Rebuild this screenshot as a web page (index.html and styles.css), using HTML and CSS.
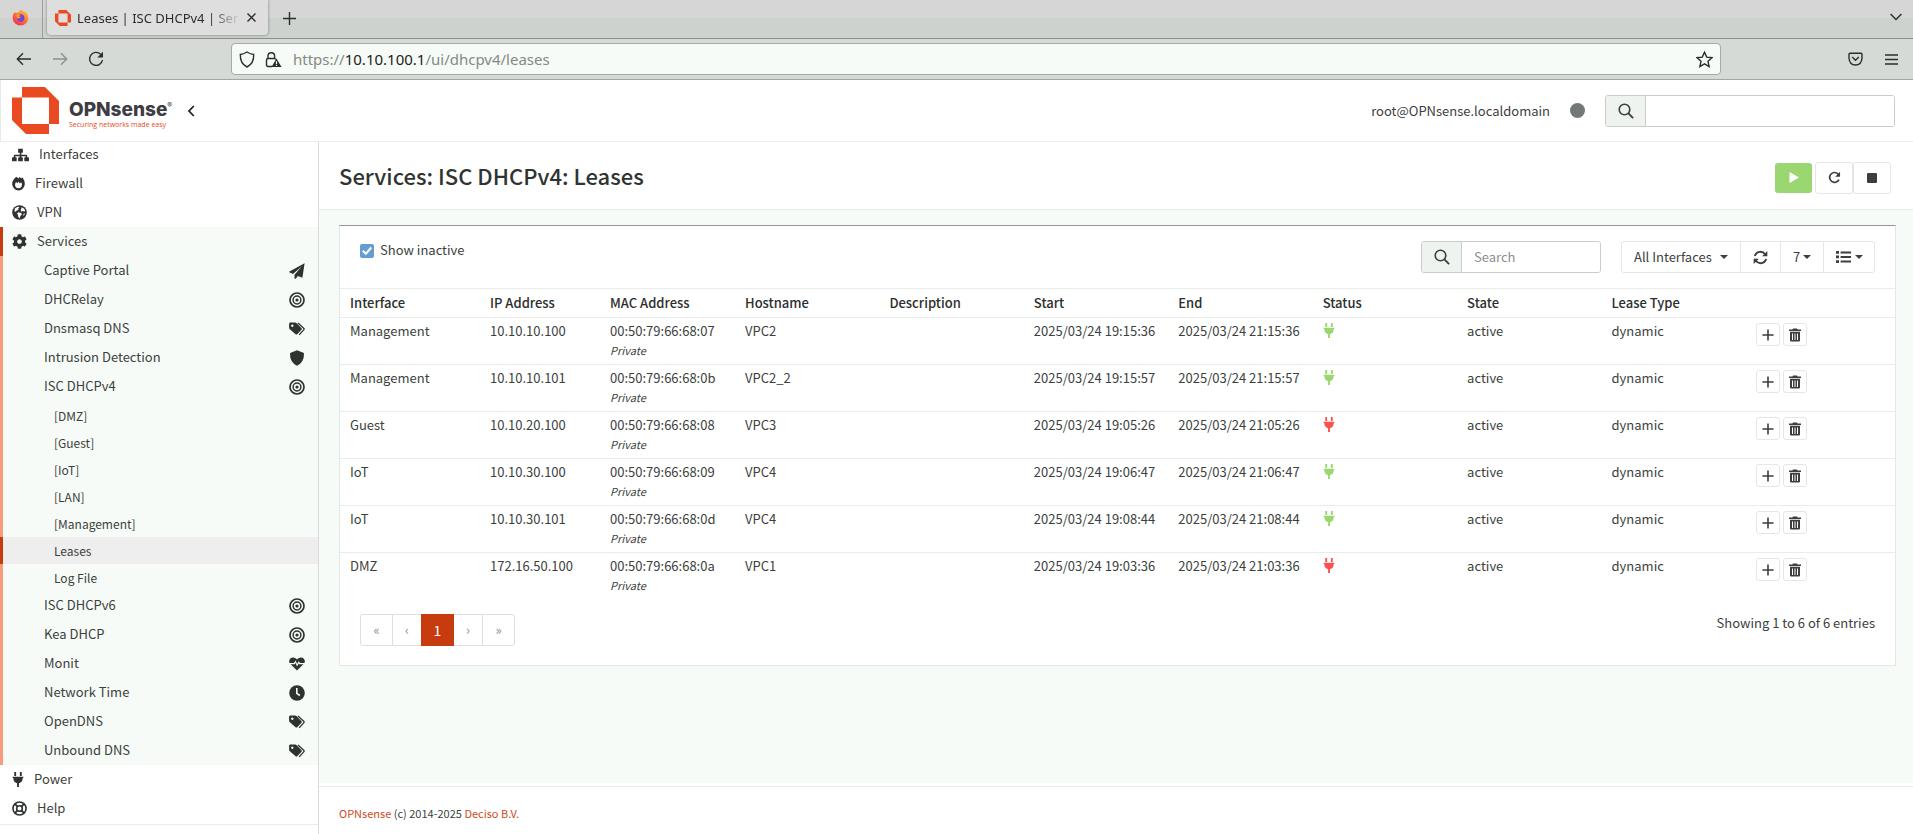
FILE: index.html
```html
<!DOCTYPE html>
<html lang="en">
<head>
<meta charset="utf-8">
<title>Leases | ISC DHCPv4 | Services</title>
<link rel="stylesheet" href="styles.css">
</head>
<body>
<svg class="defs" aria-hidden="true">
  <symbol id="i-sitemap" viewBox="0 0 18 14"><path d="M6.5 0.5h5v4.2H9.9v2h5.2a1 1 0 0 1 1 1v1.6h.9q1 0 1 1v2.4q0 1-1 1h-3q-1 0-1-1v-2.4q0-1 1-1h.5V8.2H9.9v1.1h.6q1 0 1 1v2.4q0 1-1 1h-3q-1 0-1-1v-2.4q0-1 1-1h.7V8.2H3.5v1.1H4q1 0 1 1v2.4q0 1-1 1H1q-1 0-1-1v-2.4q0-1 1-1h.9V7.700a1 1 0 0 1 1-1h5.300v-2H6.500z"/></symbol>
  <symbol id="i-fire" viewBox="0 0 14 16"><path fill-rule="evenodd" d="M4.600.8q1.200.7 2 1.900Q7.400 1.500 8.300 1q1 .6 1.700 1.500.7-.8 1.400-1 2.400 3.300 2.400 7A6.800 7 0 0 1 .2 8.500Q.2 4.500 4.600.8zM4.400 6.500Q3.300 7.800 3.300 9.300A3.700 3.700 0 0 0 10.700 9.300q0-1.500-.9-2.600L8.600 7.900 6.900 6 5.600 7.800z"/></symbol>
  <symbol id="i-globe" viewBox="0 0 16 16"><circle cx="8" cy="8" r="7.800"/><path fill="#fff" d="M3.400 3.200 6.400 1.800 8 2.300 6.600 3.700 6.900 5 4.700 6.100 4.200 7.200 2.500 6.700zM10.300 2.500l2.500 1.200 1.300 2.500-.8.600-2-.3-1.200.8-.9-1.700.5-1.200zM6.800 7.600l3 1 .8 1.200-1.600 2-1 2.700-1.300-1.700-.3-2.200-1-1.500zM12.300 9.300l1.400-.6-.5 2-1.200 1z"/></symbol>
  <symbol id="i-cog" viewBox="0 0 512 512"><path d="M487.400 315.700l-42.600-24.600c4.300-23.200 4.300-47 0-70.200l42.600-24.600c4.900-2.800 7.100-8.600 5.500-14-11.100-35.600-30-67.800-54.700-94.600-3.800-4.100-10-5.100-14.800-2.300L380.800 110c-17.900-15.400-38.500-27.300-60.800-35.100V25.800c0-5.600-3.900-10.500-9.400-11.700-36.700-8.200-74.300-7.800-109.200 0-5.500 1.200-9.400 6.100-9.400 11.700V75c-22.200 7.900-42.800 19.800-60.800 35.100L88.700 85.500c-4.900-2.800-11-1.900-14.800 2.300-24.700 26.700-43.600 58.900-54.700 94.600-1.700 5.400.6 11.200 5.500 14L67.300 221c-4.300 23.200-4.300 47 0 70.200l-42.600 24.600c-4.900 2.800-7.100 8.600-5.500 14 11.100 35.600 30 67.800 54.700 94.600 3.800 4.100 10 5.100 14.800 2.300l42.600-24.600c17.900 15.400 38.500 27.300 60.800 35.100v49.200c0 5.600 3.900 10.500 9.400 11.700 36.700 8.200 74.300 7.800 109.200 0 5.500-1.200 9.400-6.100 9.400-11.700v-49.200c22.200-7.900 42.800-19.800 60.800-35.100l42.600 24.600c4.900 2.800 11 1.900 14.800-2.300 24.700-26.700 43.600-58.900 54.700-94.600 1.500-5.500-.7-11.300-5.600-14.100zM256 336c-44.100 0-80-35.900-80-80s35.900-80 80-80 80 35.900 80 80-35.900 80-80 80z"/></symbol>
  <symbol id="i-plane" viewBox="0 0 16 16"><path d="M15.600.3 13.400 14.800 8.900 12.900 6.500 15.900 5.500 15.500V11.700L12.900 3.300 4 10.900.3 9.300Q0 8.800.4 8.500z"/></symbol>
  <symbol id="i-target" viewBox="0 0 16 16"><g fill="none" stroke="currentColor"><circle cx="8" cy="8" r="7" stroke-width="1.700"/><circle cx="8" cy="8" r="3.900" stroke-width="1.500"/></g><circle cx="8" cy="8" r="1.600"/></symbol>
  <symbol id="i-tags" viewBox="0 0 17 16"><path fill-rule="evenodd" d="M1.500 1.200h5.200q.7 0 1.200.5l5.400 5.400q.8.900 0 1.700L8.700 13.600q-.9.700-1.700 0L.6 7.900Q.1 7.400.1 6.700V2.600q0-1.400 1.400-1.400zM3.500 3.200a1.300 1.300 0 1 0 .01 0z"/><path fill="none" stroke="currentColor" stroke-width="1.400" d="M9.500 1.700 15.600 7.200q.9.800 0 1.700L10.800 14.200"/></symbol>
  <symbol id="i-shield" viewBox="0 0 16 16"><path d="M8 .3 14.300 2.700Q15 3 15 3.700 15.200 12.200 8 15.800.8 12.200 1 3.700 1 3 1.700 2.700z"/></symbol>
  <symbol id="i-heart" viewBox="0 0 16 16"><path d="M8 14.500 1.600 8.300h4.100l.8-1.500 1.500 3.600 1.700-3 .6.900h4.100zM.6 7.100C-.8 3.900 1.500 1.500 4 1.500 6 1.500 7.200 2.500 8 3.500 8.800 2.500 10 1.500 12 1.500c2.500 0 4.800 2.400 3.400 5.600H11L9.700 5.200 8.100 8 6.600 4.500 4.900 7.100z"/></symbol>
  <symbol id="i-clock" viewBox="0 0 16 16"><circle cx="8" cy="8" r="7.800"/><path fill="none" stroke="#f6fbf7" stroke-width="1.600" d="M7.800 3v5.300l3 2.200"/></symbol>
  <symbol id="i-plug" viewBox="0 0 12 16"><path d="M2 0h2v4.200H2zM8 0h2v4.200H8zM.3 5h11.400v1.500h-.7Q11 11 7 11.900V16H5v-4.100Q1 11 1 6.500H.3z"/></symbol>
  <symbol id="i-ring" viewBox="0 0 16 16"><g fill="none" stroke="currentColor"><circle cx="8" cy="8" r="7" stroke-width="1.700"/><circle cx="8" cy="8" r="3" stroke-width="1.700"/><path stroke-width="2" d="m3 3 3 3M13 3l-3 3M3 13l3-3M13 13l-3-3"/></g></symbol>
  <symbol id="i-search" viewBox="0 0 16 16"><g fill="none" stroke="currentColor"><circle cx="6.500" cy="6.500" r="5.300" stroke-width="1.600"/><path stroke-width="1.900" stroke-linecap="round" d="m10.700 10.700 3.900 3.900"/></g></symbol>
  <symbol id="i-repeat" viewBox="0 0 14 14"><path fill="none" stroke="currentColor" stroke-width="1.800" d="M11.300 3.700A5.300 5.300 0 1 0 11.800 9.300"/><path d="M13 .8v5.300H7.800z"/></symbol>
  <symbol id="i-sync" viewBox="0 0 16 16"><g fill="none" stroke="currentColor" stroke-width="2"><path d="M2 6.500A6.100 6.100 0 0 1 12.900 4.500M14 9.500A6.100 6.100 0 0 1 3.100 11.500"/></g><path d="M15.300 1v5.600H9.700zM.7 15V9.400h5.600z"/></symbol>
  <symbol id="i-list" viewBox="0 0 16 14"><path d="M1 1h3v2.700H1zM1 5.600h3v2.700H1zM1 10.200h3v2.700H1zM5.600 1.400H16v2H5.600zM5.600 6H16v2H5.600zM5.600 10.600H16v2H5.600z"/></symbol>
  <symbol id="i-plus" viewBox="0 0 12 12"><path d="M5.200.4h1.600v4.800h4.800v1.600H6.800v4.800H5.200V6.800H.4V5.200h4.800z"/></symbol>
  <symbol id="i-trash" viewBox="0 0 12 14"><path fill-rule="evenodd" d="M4 .4h4l.6 1H12v1.500H0V1.400h3.400zM1 3.700h10v8.800q0 1.100-1.100 1.100H2.100Q1 13.600 1 12.500zM3 5.400v6.500h1V5.400zM5.500 5.400v6.500h1V5.400zM8 5.400v6.500h1V5.400z"/></symbol>
  <symbol id="i-caret" viewBox="0 0 8 4"><path d="M0 0h8L4 4z"/></symbol>
  <symbol id="i-opn" viewBox="0 0 47 47"><path fill="#e94a22" d="M10 0h23l14 14v23h-10V10.500H10zM0 10.500h10v26.500h27v10H14L0 33z"/></symbol>
</svg>

<div class="browser">
  <div class="tabbar">
    <div class="pinned">
      <svg width="17" height="17" viewBox="0 0 17 17"><defs><linearGradient id="fx" x1="1" y1="0" x2="0.300" y2="1"><stop offset="0" stop-color="#ffe04a"/><stop offset=".5" stop-color="#ff7a2e"/><stop offset="1" stop-color="#f3305f"/></linearGradient></defs><path fill="url(#fx)" d="M2.500 3.200 4.500 4 6.500 3.200Q8 .9 10.500.5q0 1.300 1.500 2.700l1.500-1q3 3 2.900 6.500a7.900 7.900 0 0 1-15.800 0Q.6 5.500 2.500 3.200z"/><circle cx="8.700" cy="9" r="3.700" fill="#6b48d8"/><path fill="#ff9a2a" d="M4 6q2-1.500 4.500 0L6.800 7.500q1 .5 2.200.3Q8 10.300 5.300 9.300z"/></svg>
    </div>
    <div class="tab">
      <svg width="16" height="16"><use href="#i-opn"/></svg>
      <span class="tab-title">Leases | ISC DHCPv4 | Ser</span>
      <button class="tab-close" aria-label="Close tab"><svg width="9" height="9" viewBox="0 0 9 9"><path class="line" d="m.5.5 8 8M8.500.5l-8 8"/></svg></button>
    </div>
    <button class="newtab" aria-label="New tab"><svg width="13" height="13" viewBox="0 0 13 13"><path class="line" d="M6.500 0v13M0 6.500h13"/></svg></button>
    <button class="alltabs" aria-label="List tabs"><svg width="12" height="8" viewBox="0 0 12 8"><path class="line" d="m.6 1 5.400 5.400L11.400 1"/></svg></button>
  </div>
  <div class="navbar">
    <div class="navbuttons">
      <button aria-label="Back"><svg width="16" height="14" viewBox="0 0 16 14"><path class="line" d="M15 7H1.500M7 1.300 1.300 7 7 12.700"/></svg></button>
      <button class="dim" aria-label="Forward"><svg width="16" height="14" viewBox="0 0 16 14"><path class="line" d="M1 7h13.500M9 1.300 14.700 7 9 12.700"/></svg></button>
      <button aria-label="Reload"><svg width="16" height="16" viewBox="0 0 16 16"><path class="line" d="M12.700 3.300A6.500 6.500 0 1 0 14.500 9"/><path d="M15 .8v5.700H9.300z"/></svg></button>
    </div>
    <div class="urlbar">
      <svg width="16" height="17" viewBox="0 0 16 17"><path class="line" d="M8 1q3.500 2.300 6.700 2.500Q15 12.500 8 16 1 12.500 1.300 3.500 4.500 3.300 8 1z"/></svg>
      <svg width="17" height="17" viewBox="0 0 17 17"><path class="line" d="M7 15.500H3q-1.500 0-1.500-1.500V9q0-1.500 1.500-1.500h6.500q1 0 1.300 1M3 7.500V5a3.300 3.300 0 0 1 6.600 0v2.500"/><path d="m11.500 7.500 5 8.500H6.500z"/><path stroke="#f6fbf7" stroke-width="1.200" d="M11.500 10.300v2.700M11.500 13.800V15"/></svg>
      <div class="url">https://<b>10.10.100.1</b>/ui/dhcpv4/leases</div>
      <svg width="17" height="17" viewBox="0 0 17 17"><path class="line" d="m8.500 1.200 2.200 4.900 5.300.6-4 3.600 1.100 5.200-4.600-2.700-4.600 2.700L5 10.300 1 6.700l5.300-.6z"/></svg>
    </div>
    <div class="navtools">
      <button aria-label="Pocket"><svg width="15" height="14" viewBox="0 0 15 14"><path class="line" d="M2 1.200h11q1 0 1 1v4Q13.500 12.800 7.500 13 1.500 12.800 1 6.200v-4q0-1 1-1zM4.200 5l3.300 3.200L10.800 5"/></svg></button>
      <button aria-label="Menu"><svg width="13" height="11" viewBox="0 0 13 11"><path class="line" d="M0 1h13M0 5.500h13M0 10h13"/></svg></button>
    </div>
  </div>
</div>

<header class="topbar">
  <a class="brand" href="#">
    <svg width="47" height="47"><use href="#i-opn"/></svg>
    <span class="brand-words"><span class="brand-name">OPNsense<sup>®</sup></span><span class="brand-tag">Securing networks made easy</span></span>
  </a>
  <button class="collapse" aria-label="Collapse menu"><svg width="8" height="12" viewBox="0 0 8 12"><path fill="none" stroke="#222" stroke-width="1.800" d="M6.800 1 2 6l4.800 5"/></svg></button>
  <div class="topright">
    <span>root@OPNsense.localdomain</span>
    <span class="dot"></span>
    <div class="input-group global">
      <span class="addon"><svg width="16" height="16"><use href="#i-search"/></svg></span>
      <input type="text" aria-label="Search menu">
    </div>
  </div>
</header>

<div class="layout">
  <aside class="sidebar">
    <nav>
      <a href="#"><svg width="17" height="14"><use href="#i-sitemap"/></svg>Interfaces</a>
      <a href="#"><svg width="13" height="15"><use href="#i-fire"/></svg>Firewall</a>
      <a href="#"><svg width="15" height="15"><use href="#i-globe"/></svg>VPN</a>
      <div class="open">
        <a class="current" href="#"><svg width="15" height="15"><use href="#i-cog"/></svg>Services</a>
        <a class="sub" href="#">Captive Portal<svg width="16" height="16"><use href="#i-plane"/></svg></a>
        <a class="sub" href="#">DHCRelay<svg width="16" height="16"><use href="#i-target"/></svg></a>
        <a class="sub" href="#">Dnsmasq DNS<svg width="16" height="16"><use href="#i-tags"/></svg></a>
        <a class="sub" href="#">Intrusion Detection<svg width="16" height="16"><use href="#i-shield"/></svg></a>
        <a class="sub" href="#">ISC DHCPv4<svg width="16" height="16"><use href="#i-target"/></svg></a>
        <div class="leaves">
          <a href="#">[DMZ]</a>
          <a href="#">[Guest]</a>
          <a href="#">[IoT]</a>
          <a href="#">[LAN]</a>
          <a href="#">[Management]</a>
          <a class="selected" href="#">Leases</a>
          <a href="#">Log File</a>
        </div>
        <a class="sub" href="#">ISC DHCPv6<svg width="16" height="16"><use href="#i-target"/></svg></a>
        <a class="sub" href="#">Kea DHCP<svg width="16" height="16"><use href="#i-target"/></svg></a>
        <a class="sub" href="#">Monit<svg width="16" height="16"><use href="#i-heart"/></svg></a>
        <a class="sub" href="#">Network Time<svg width="16" height="16"><use href="#i-clock"/></svg></a>
        <a class="sub" href="#">OpenDNS<svg width="16" height="16"><use href="#i-tags"/></svg></a>
        <a class="sub" href="#">Unbound DNS<svg width="16" height="16"><use href="#i-tags"/></svg></a>
      </div>
      <a href="#"><svg width="12" height="15"><use href="#i-plug"/></svg>Power</a>
      <a href="#"><svg width="15" height="15"><use href="#i-ring"/></svg>Help</a>
    </nav>
  </aside>

  <div class="page">
    <div class="pagehead">
      <h1>Services: ISC DHCPv4: Leases</h1>
      <div class="service">
        <button class="start" aria-label="Start"><svg width="10" height="11" viewBox="0 0 10 11"><path d="M.5 0 10 5.500.5 11z"/></svg></button>
        <button aria-label="Restart"><svg width="13" height="13"><use href="#i-repeat"/></svg></button>
        <button aria-label="Stop"><svg width="10" height="10" viewBox="0 0 10 10"><rect width="10" height="10" rx="1"/></svg></button>
      </div>
    </div>

    <main class="content">
      <section class="panel">
        <div class="toolbar">
          <label class="check"><input type="checkbox" checked><span>Show inactive</span></label>
          <div class="actions">
            <div class="input-group table-search">
              <span class="addon"><svg width="16" height="16"><use href="#i-search"/></svg></span>
              <input type="text" placeholder="Search" aria-label="Search leases">
            </div>
            <div class="btn-group">
              <span class="pick wide"><select aria-label="Interface"><option>All Interfaces</option></select><svg width="8" height="4"><use href="#i-caret"/></svg></span>
              <button aria-label="Refresh"><svg width="15" height="15"><use href="#i-sync"/></svg></button>
              <span class="pick rows"><select aria-label="Rows per page"><option>7</option></select><svg width="8" height="4"><use href="#i-caret"/></svg></span>
              <button class="columns" aria-label="Columns"><svg width="16" height="14"><use href="#i-list"/></svg><svg width="8" height="4"><use href="#i-caret"/></svg></button>
            </div>
          </div>
        </div>

        <table>
          <colgroup><col class="c-if"><col class="c-ip"><col class="c-mac"><col><col><col><col><col><col><col><col class="c-cmd"></colgroup>
          <thead>
            <tr><th>Interface</th><th>IP Address</th><th>MAC Address</th><th>Hostname</th><th>Description</th><th>Start</th><th>End</th><th>Status</th><th>State</th><th>Lease Type</th><th></th></tr>
          </thead>
          <tbody>
            <tr><td>Management</td><td>10.10.10.100</td><td>00:50:79:66:68:07<small>Private</small></td><td>VPC2</td><td></td><td>2025/03/24 19:15:36</td><td>2025/03/24 21:15:36</td><td class="up"><svg width="12" height="15"><use href="#i-plug"/></svg></td><td>active</td><td>dynamic</td><td class="cmd"><div><button aria-label="Add"><svg width="12" height="12"><use href="#i-plus"/></svg></button><button aria-label="Delete"><svg width="12" height="14"><use href="#i-trash"/></svg></button></div></td></tr>
            <tr><td>Management</td><td>10.10.10.101</td><td>00:50:79:66:68:0b<small>Private</small></td><td>VPC2_2</td><td></td><td>2025/03/24 19:15:57</td><td>2025/03/24 21:15:57</td><td class="up"><svg width="12" height="15"><use href="#i-plug"/></svg></td><td>active</td><td>dynamic</td><td class="cmd"><div><button aria-label="Add"><svg width="12" height="12"><use href="#i-plus"/></svg></button><button aria-label="Delete"><svg width="12" height="14"><use href="#i-trash"/></svg></button></div></td></tr>
            <tr><td>Guest</td><td>10.10.20.100</td><td>00:50:79:66:68:08<small>Private</small></td><td>VPC3</td><td></td><td>2025/03/24 19:05:26</td><td>2025/03/24 21:05:26</td><td class="down"><svg width="12" height="15"><use href="#i-plug"/></svg></td><td>active</td><td>dynamic</td><td class="cmd"><div><button aria-label="Add"><svg width="12" height="12"><use href="#i-plus"/></svg></button><button aria-label="Delete"><svg width="12" height="14"><use href="#i-trash"/></svg></button></div></td></tr>
            <tr><td>IoT</td><td>10.10.30.100</td><td>00:50:79:66:68:09<small>Private</small></td><td>VPC4</td><td></td><td>2025/03/24 19:06:47</td><td>2025/03/24 21:06:47</td><td class="up"><svg width="12" height="15"><use href="#i-plug"/></svg></td><td>active</td><td>dynamic</td><td class="cmd"><div><button aria-label="Add"><svg width="12" height="12"><use href="#i-plus"/></svg></button><button aria-label="Delete"><svg width="12" height="14"><use href="#i-trash"/></svg></button></div></td></tr>
            <tr><td>IoT</td><td>10.10.30.101</td><td>00:50:79:66:68:0d<small>Private</small></td><td>VPC4</td><td></td><td>2025/03/24 19:08:44</td><td>2025/03/24 21:08:44</td><td class="up"><svg width="12" height="15"><use href="#i-plug"/></svg></td><td>active</td><td>dynamic</td><td class="cmd"><div><button aria-label="Add"><svg width="12" height="12"><use href="#i-plus"/></svg></button><button aria-label="Delete"><svg width="12" height="14"><use href="#i-trash"/></svg></button></div></td></tr>
            <tr><td>DMZ</td><td>172.16.50.100</td><td>00:50:79:66:68:0a<small>Private</small></td><td>VPC1</td><td></td><td>2025/03/24 19:03:36</td><td>2025/03/24 21:03:36</td><td class="down"><svg width="12" height="15"><use href="#i-plug"/></svg></td><td>active</td><td>dynamic</td><td class="cmd"><div><button aria-label="Add"><svg width="12" height="12"><use href="#i-plus"/></svg></button><button aria-label="Delete"><svg width="12" height="14"><use href="#i-trash"/></svg></button></div></td></tr>
          </tbody>
        </table>

        <div class="tablefoot">
          <nav class="pager" aria-label="Pages">
            <a class="edge" href="#">«</a><a href="#">‹</a><a class="active" href="#">1</a><a href="#">›</a><a class="edge" href="#">»</a>
          </nav>
          <span class="count">Showing 1 to 6 of 6 entries</span>
        </div>
      </section>
    </main>

    <footer><div><a href="#">OPNsense</a> (c) 2014-2025 <a href="#">Deciso B.V.</a></div></footer>
  </div>
</div>
</body>
</html>
```
FILE: styles.css
```css
* { box-sizing: border-box; }
body {
  margin: 0;
  min-height: 100vh;
  display: flex;
  flex-direction: column;
  overflow: hidden;
  background: #fff;
  color: #3c3f3d;
  font: 13px/20px "Noto Sans CJK SC", "Noto Sans", sans-serif;
}
a { color: inherit; text-decoration: none; }
svg { display: block; flex: none; fill: currentColor; }
button, select, input { font: inherit; color: inherit; margin: 0; }
button { display: flex; align-items: center; justify-content: center; padding: 0; border: 0; background: none; }
.defs { position: absolute; width: 0; height: 0; }
.line { fill: none; stroke: currentColor; stroke-width: 1.4; }

/* browser frame */
.browser { font-family: "Noto Sans", sans-serif; color: #2b2d2b; }
.tabbar {
  display: flex;
  height: 39px;
  border-bottom: 1px solid #8a8e8b;
  background: linear-gradient(#d6d6d6 18px, #cdd2ce 18px);
}
.pinned { width: 43px; padding: 9px 0 0 12px; border-right: 1px solid #9a9e9b; }
.tab {
  display: flex;
  align-items: center;
  gap: 6px;
  width: 221px;
  height: 35px;
  margin-left: 4px;
  padding: 0 12px 0 8px;
  border-radius: 0 0 4px 4px;
  background: #dedede;
  box-shadow: 0 0 3px #777;
}
.tab-title {
  flex: 1;
  white-space: nowrap;
  font-size: 13px;
  -webkit-mask-image: linear-gradient(90deg, #000 80%, transparent);
  mask-image: linear-gradient(90deg, #000 80%, transparent);
}
.newtab { width: 42px; height: 36px; }
.alltabs { width: 34px; height: 33px; margin-left: auto; }
.navbar {
  display: flex;
  align-items: center;
  height: 41px;
  border-bottom: 1px solid #a3a8a4;
  background: #d5dad6;
}
.navbuttons { display: flex; gap: 20px; width: 231px; padding-left: 16px; }
.navbuttons .dim { color: #8d918e; }
.urlbar {
  display: flex;
  align-items: center;
  flex: 1;
  gap: 10px;
  height: 32px;
  padding: 0 7px;
  border: 1px solid #a6aba7;
  border-radius: 4px;
  background: #f6fbf7;
}
.url { flex: 1; padding-left: 1px; font-size: 15px; color: #858986; }
.url b { font-weight: 400; color: #222; }
.navtools { display: flex; justify-content: flex-end; gap: 22px; width: 192px; padding-right: 15px; }

/* top bar */
.topbar {
  position: relative;
  z-index: 1;
  display: flex;
  align-items: center;
  height: 62px;
  padding: 0 18px 0 11px;
  border-left: 1px solid #e8ebe9;
  border-bottom: 1px solid #ebeeec;
  background: #fff;
}
.brand { display: flex; align-items: center; gap: 10px; }
.brand-words { display: flex; flex-direction: column; padding-top: 6px; }
.brand-name { font: 800 19px/22px Inter, sans-serif; color: #403c43; }
.brand-name sup { font-size: 7px; font-weight: 400; line-height: 0; vertical-align: 8px; }
.brand-tag { font: 7px/8px "Open Sans", sans-serif; color: #e94a22; }
.collapse { width: 16px; height: 24px; margin-left: 11px; }
.topright { display: flex; align-items: center; gap: 20px; margin-left: auto; }
.dot { width: 15px; height: 15px; border-radius: 50%; background: #747975; }
.input-group {
  display: flex;
  height: 32px;
  border: 1px solid #c9cecb;
  border-radius: 3px;
  overflow: hidden;
  background: #fff;
}
.global { width: 290px; }
.table-search { width: 180px; }
.addon {
  display: flex;
  align-items: center;
  justify-content: center;
  flex: none;
  width: 40px;
  border-right: 1px solid #c9cecb;
  background: #eef3ef;
}
.input-group input { flex: 1; min-width: 0; padding: 0 12px; border: 0; background: #fff; }
.input-group input::placeholder { color: #8b8f8c; }

/* side menu */
.layout { display: flex; flex: 1; }
.sidebar { width: 319px; flex: none; margin-top: -2px; border-right: 1px solid #d9dcda; }
.sidebar nav { border-bottom: 1px solid #e9ecea; padding-bottom: 1px; }
.sidebar a { display: flex; align-items: center; gap: 10px; height: 29px; padding: 0 0 2px 12px; }
.sidebar svg { margin-top: 2px; color: #2f3330; }
.open { border-left: 3px solid #f89b7b; background: #f6fbf7; }
.open a { margin-left: -3px; border-left: 3px solid transparent; padding-left: 9px; }
.open .current { border-left-color: #c63c0f; }
.open .sub { justify-content: space-between; padding: 0 13px 2px 41px; }
.leaves { padding-top: 1px; }
.open .leaves a { height: 27px; padding: 0 0 0 51px; margin-left: -3px; padding-left: 51px; font-size: 12px; }
.leaves .selected { border-left-color: #c63c0f; background: #eee; }

/* page */
.page { display: flex; flex-direction: column; flex: 1; min-width: 0; }
.pagehead {
  display: flex;
  align-items: center;
  justify-content: space-between;
  height: 68px;
  padding: 0 22px 0 20px;
  border-bottom: 1px solid #e6ebe8;
}
h1 { margin: 0; padding-bottom: 2px; font-size: 22px; line-height: 28px; font-weight: 500; color: #303431; }
.service { display: flex; align-items: center; padding-top: 4px; }
.service button { width: 38px; height: 32px; border: 1px solid #e3e8e5; border-radius: 3px; background: #fff; }
.service .start { width: 37px; height: 30px; margin-right: 3px; border: 0; background: #9bd770; color: #fff; }
.content { flex: 1; padding: 15px 17px 0 20px; background: #f6fbf7; }
.panel { border: 1px solid #e3e8e5; border-top-color: #929593; background: #fff; }
.toolbar { display: flex; justify-content: space-between; height: 62px; padding: 15px 20px 0; }
.check { display: flex; align-items: center; gap: 6px; height: 20px; }
.check span { padding-bottom: 2px; }
.check input {
  display: flex;
  align-items: center;
  justify-content: center;
  appearance: none;
  width: 14px;
  height: 14px;
  border-radius: 2px;
  background: #c9cecb;
}
.check input:checked { background: #659dd2; }
.check input:checked::before {
  content: "";
  width: 10px;
  height: 10px;
  background: #fff;
  clip-path: polygon(0 55%, 15% 40%, 38% 62%, 85% 8%, 100% 22%, 40% 92%);
}
.actions { display: flex; gap: 20px; }
.btn-group { display: flex; height: 32px; border: 1px solid #e3e8e5; border-radius: 3px; }
.btn-group > * + * { border-left: 1px solid #e3e8e5; }
.btn-group button { width: 40px; }
.btn-group .columns { width: 51px; gap: 4px; }
.pick { position: relative; display: flex; align-items: center; }
.pick select {
  appearance: none;
  height: 30px;
  padding: 0 0 0 12px;
  border: 0;
  background: transparent;
}
.pick svg { position: absolute; right: 12px; pointer-events: none; }
.pick.wide, .pick.wide select { width: 118px; }
.pick.rows, .pick.rows select { width: 43px; }

table { width: 100%; table-layout: fixed; border-collapse: collapse; }
.c-if { width: 140px; }
.c-ip { width: 120px; }
.c-mac { width: 135px; }
.c-cmd { width: 149px; }
th, td { padding: 3px 0 0 10px; border-top: 1px solid #e9edea; text-align: left; vertical-align: top; white-space: nowrap; }
th { height: 29px; padding-top: 4px; font-weight: 500; color: #2b2e2c; }
td { height: 47px; }
td svg { margin-top: 2px; }
td button svg { margin-top: 0; }
small { display: block; font-size: 11px; line-height: 18px; font-style: italic; }
.up { color: #9bd770; }
.down { color: #fb5050; }
.cmd div { display: flex; gap: 3px; padding-top: 2px; }
.cmd button { width: 24px; height: 23px; border: 1px solid #e3e8e5; border-radius: 3px; background: #fff; }
.tablefoot { display: flex; justify-content: space-between; padding: 14px 20px 19px; }
.count { height: 20px; margin-top: -1px; }
.pager { display: flex; height: 32px; border: 1px solid #dde1de; border-radius: 3px; color: #8d918e; }
.pager a { display: flex; align-items: center; justify-content: center; width: 29px; }
.pager .edge { width: 31px; }
.pager a + a { border-left: 1px solid #dde1de; }
.pager .edge:last-child { width: 32px; }
.pager a.active { width: 33px; margin: -1px 0; border: 0; background: #c63c0f; color: #fff; font-size: 14px; }
.pager .active + a { border-left: 0; width: 28px; }

footer { padding-top: 3px; font-size: 11px; }
footer div { height: 48px; padding: 16px 20px 0; border-top: 1px solid #e9ecea; }
footer a { color: #d04a1e; }
```
